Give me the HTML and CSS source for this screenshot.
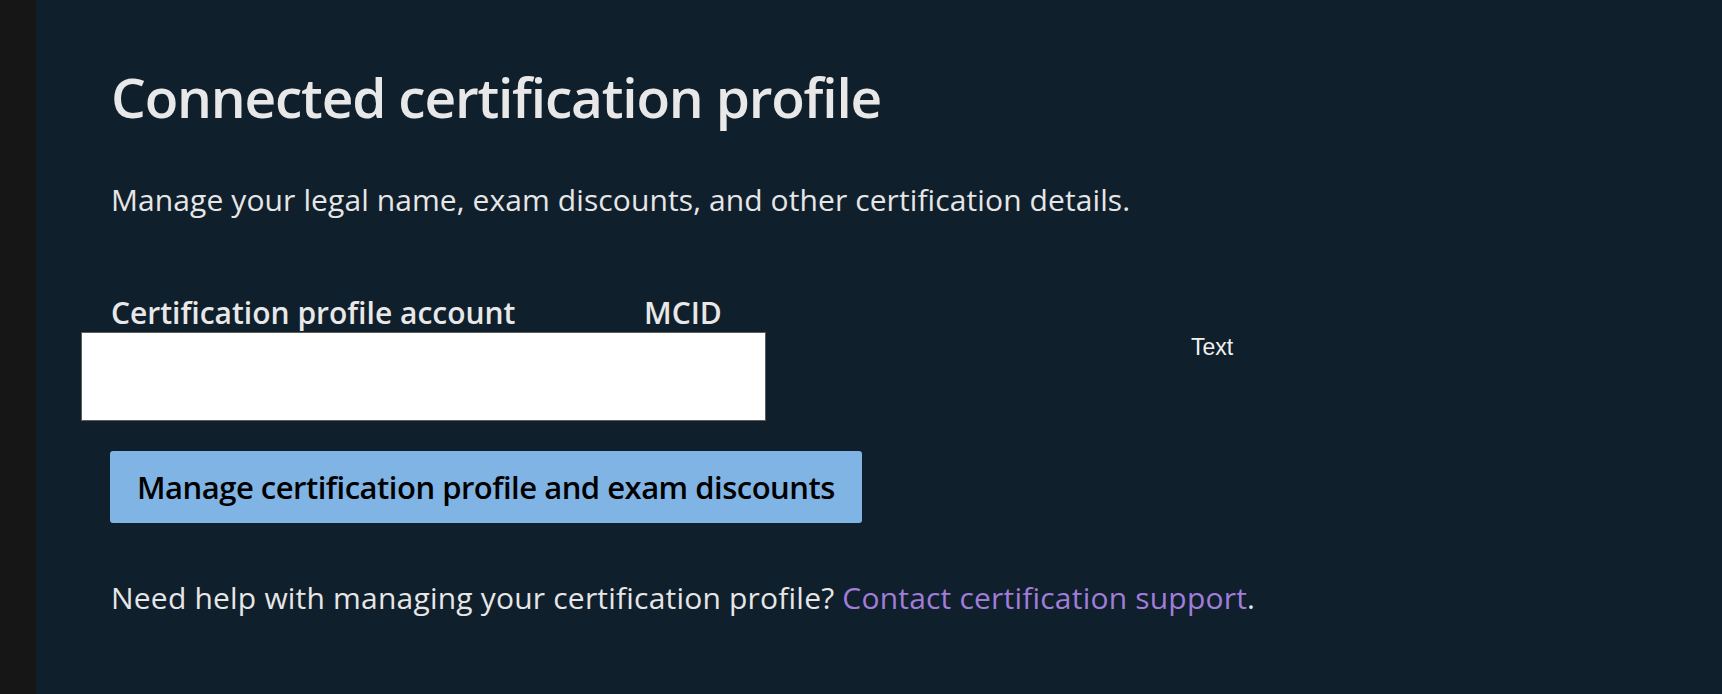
FILE: index.html
```html
<!DOCTYPE html>
<html lang="en">
<head>
<meta charset="utf-8">
<title>Connected certification profile</title>
<link rel="stylesheet" href="styles.css">
</head>
<body>
<div class="page">
  <aside class="rail"></aside>
  <main class="content">
    <h1 class="title">Connected certification profile</h1>
    <p class="lead">Manage your legal name, exam discounts, and other certification details.</p>
    <div class="profile-grid">
      <div class="col-head">Certification profile account</div>
      <div class="col-head">MCID</div>
      <div class="col-head"></div>
      <div class="redacted"></div>
      <div class="value-text">Text</div>
    </div>
    <div class="actions">
      <button class="btn-primary" type="button">Manage certification profile and exam discounts</button>
    </div>
    <p class="help">Need help with managing your certification profile? <a class="link" href="#">Contact certification support</a>.</p>
  </main>
</div>
</body>
</html>
```
FILE: styles.css
```css
html, body {
  margin: 0;
  padding: 0;
  height: 100%;
  background: #161616;
}

body {
  font-family: "Open Sans", "Noto Sans", sans-serif;
  color: #e6e6e6;
}

.page {
  display: flex;
  min-height: 100%;
}

.rail {
  flex: 0 0 36px;
  background: #161616;
}

.content {
  flex: 1;
  background: #101f2c;
  padding: 63px 0 0 75px;
  box-sizing: border-box;
  min-height: 694px;
}

.title {
  margin: 0;
  font-size: 55px;
  line-height: 68px;
  font-weight: 600;
  letter-spacing: -1.2px;
  color: #e8e8e8;
}

.lead {
  margin: 49px 0 0;
  font-size: 30px;
  line-height: 40px;
  font-weight: 400;
  letter-spacing: 0.1px;
}

.profile-grid {
  margin-top: 74px;
  display: grid;
  grid-template-columns: 533px 547px auto;
  align-items: start;
}

.col-head {
  font-size: 30px;
  line-height: 38px;
  font-weight: 600;
  letter-spacing: 0;
  color: #e8e8e8;
}

.redacted {
  grid-column: 1 / 3;
  margin-left: -30px;
  width: 685px;
  height: 89px;
  box-sizing: border-box;
  background: #ffffff;
  border: 1px solid #5c5c5c;
}

.value-text {
  font-family: "Liberation Sans", Arial, sans-serif;
  font-size: 23px;
  line-height: 25px;
  padding-top: 3px;
  color: #f0f0f0;
}

.actions {
  margin-top: 30px;
  margin-left: -1px;
}

.btn-primary {
  font-family: inherit;
  font-size: 31px;
  line-height: 40px;
  font-weight: 600;
  letter-spacing: -0.5px;
  color: #000000;
  background: #80b4e4;
  border: 0;
  border-radius: 3px;
  padding: 16px 27px;
  cursor: pointer;
}

.help {
  margin: 55px 0 0;
  font-size: 30px;
  line-height: 40px;
  letter-spacing: 0.2px;
}

.link {
  color: #a07dd8;
  text-decoration: none;
}
```
